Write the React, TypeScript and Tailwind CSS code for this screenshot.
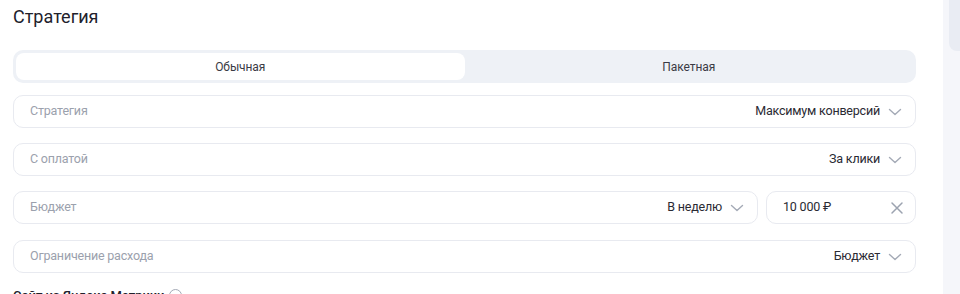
import { useState } from "react";

function Chevron() {
  return (
    <svg width="14" height="14" viewBox="0 0 14 14" fill="none" className="shrink-0">
      <path d="M1.5 4.5 7 9.5l5.5-5" stroke="#a4aab6" strokeWidth="1.4" strokeLinecap="round" strokeLinejoin="round" />
    </svg>
  );
}

function Cross() {
  return (
    <svg width="14" height="14" viewBox="0 0 14 14" fill="none" className="shrink-0">
      <path d="M2 2l10 10M12 2 2 12" stroke="#9ca3b0" strokeWidth="1.5" strokeLinecap="round" />
    </svg>
  );
}

interface SelectFieldProps {
  label: string;
  value: string;
  className?: string;
}

function SelectField({ label, value, className }: SelectFieldProps) {
  return (
    <div className={`flex items-center h-[33px] pl-4 pr-[13px] border border-[#e8eaf0] rounded-[10px] bg-white ${className ? className : ""}`}>
      <span className="text-[12.5px] tracking-[-0.2px] text-[#9ba1ad] flex-1">{label}</span>
      <span className="text-[12.5px] tracking-[-0.2px] text-[#2a2a33] mr-[8px]">{value}</span>
      <Chevron />
    </div>
  );
}

export default function App() {
  const [tab, setTab] = useState("regular");

  return (
    <div className="flex w-[960px] h-[294px] overflow-hidden bg-white font-['Roboto',_'Noto_Sans',sans-serif]">
      <div className="w-[903px] ml-[13px] shrink-0">
        <h2 className="text-[18px] font-normal text-[#21212b] leading-[24px] mt-[5px]">Стратегия</h2>

        <div className="flex h-[33px] mt-[21px] p-[3px] bg-[#eef1f6] rounded-[10px]">
          <button
            onClick={() => setTab("regular")}
            className={`flex-1 rounded-[8px] text-[12px] tracking-[-0.1px] text-[#3a3a44] ${tab === "regular" ? "bg-white" : ""}`}>
            Обычная
          </button>
          <button
            onClick={() => setTab("batch")}
            className={`flex-1 rounded-[8px] text-[12px] tracking-[-0.1px] text-[#3a3a44] ${tab === "batch" ? "bg-white" : ""}`}>
            Пакетная
          </button>
        </div>

        <div className="flex flex-col gap-[15px] mt-[12px]">
          <SelectField label="Стратегия" value="Максимум конверсий" />
          <SelectField label="С оплатой" value="За клики" />
          <div className="flex gap-[8px]">
            <SelectField label="Бюджет" value="В неделю" className="flex-1" />
            <div className="flex items-center w-[150px] h-[33px] pl-4 pr-[11px] border border-[#e8eaf0] rounded-[10px]">
              <span className="text-[12.5px] tracking-[-0.2px] text-[#2a2a33] flex-1">10 000 ₽</span>
              <Cross />
            </div>
          </div>
          <SelectField label="Ограничение расхода" value="Бюджет" className="mt-[1px]" />
        </div>

        <div className="flex items-center gap-[5px] mt-[13px] text-[13px] font-medium text-[#21212b]">
          Сайт из Яндекс Метрики
          <span className="w-[13px] h-[13px] rounded-full border border-[#a4aab6]"></span>
        </div>
      </div>

      <div className="ml-[27px] flex-1 bg-[#f5f6fa]">
        <div className="ml-[6px] h-[51px] bg-[#e9ecf3] rounded-bl-[8px]"></div>
      </div>
    </div>
  );
}
